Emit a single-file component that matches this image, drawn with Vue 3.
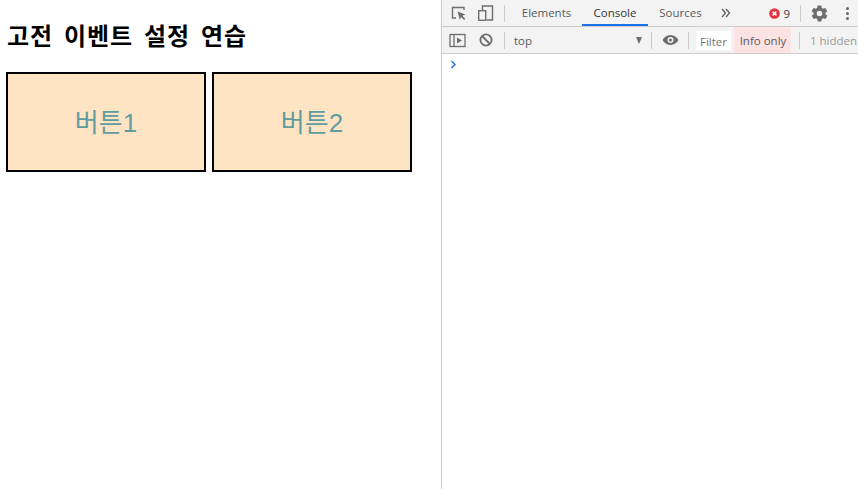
<script setup>
const buttons = ['버튼1', '버튼2']
const tabs = [
  { label: 'Elements', active: false, cls: 'w-el' },
  { label: 'Console', active: true, cls: 'w-co' },
  { label: 'Sources', active: false, cls: 'w-so' },
]
</script>

<template>
  <div class="page">
    <main class="content">
      <h1 class="title">고전 이벤트 설정 연습</h1>
      <div class="buttons">
        <button v-for="b in buttons" :key="b" class="btn" type="button"><span class="btn-label">{{ b }}</span></button>
      </div>
    </main>
    <aside class="devtools">
      <div class="bar top">
        <div class="icon-group">
          <svg class="ic" width="18" height="18" viewBox="0 0 18 18">
            <path d="M6 14H2.500V3.500H14V6" fill="none" stroke="#6e6e6e" stroke-width="1.400"/>
            <path d="M7.500 7.500l8 3-3.200 1.300 3 3-1.200 1.200-3-3L9.900 16z" fill="#6e6e6e"/>
          </svg>
          <svg class="ic" width="18" height="18" viewBox="0 0 18 18">
            <path d="M5.500 6V2h10v14h-6" fill="none" stroke="#6e6e6e" stroke-width="1.400"/>
            <rect x="1.700" y="6.700" width="7" height="9.600" fill="none" stroke="#6e6e6e" stroke-width="1.400"/>
          </svg>
        </div>
        <span class="sep sep-a"></span>
        <nav class="tabs">
          <span v-for="t in tabs" :key="t.label" class="tab" :class="[t.cls, { active: t.active }]">{{ t.label }}</span>
          <span class="more">
            <svg width="10" height="10" viewBox="0 0 10 10">
              <path d="M1 1l3.500 4L1 9M5 1l3.500 4L5 9" fill="none" stroke="#5a5a5a" stroke-width="1.200"/>
            </svg>
          </span>
        </nav>
        <div class="right">
          <span class="err">
            <svg width="11" height="11" viewBox="0 0 11 11">
              <circle cx="5.500" cy="5.500" r="5.300" fill="#e8323f"/>
              <path d="M3.600 3.600l3.800 3.800M7.400 3.600l-3.800 3.800" stroke="#fff" stroke-width="1.500"/>
            </svg>
            <span>9</span>
          </span>
          <span class="sep"></span>
          <svg class="gear" width="19" height="19" viewBox="0 0 24 24">
            <path fill="#6e6e6e" d="M19.400 13a7.600 7.600 0 0 0 0-2l2.100-1.600a.5.5 0 0 0 .1-.7l-2-3.400a.5.5 0 0 0-.6-.2l-2.500 1a7.400 7.400 0 0 0-1.700-1l-.4-2.700a.5.5 0 0 0-.5-.4h-4a.5.5 0 0 0-.5.4l-.4 2.700a7.400 7.400 0 0 0-1.700 1l-2.500-1a.5.5 0 0 0-.6.2l-2 3.400a.5.5 0 0 0 .1.7L4.600 11a7.600 7.600 0 0 0 0 2l-2.100 1.600a.5.5 0 0 0-.1.7l2 3.400c.1.2.4.3.6.2l2.500-1c.5.4 1.100.7 1.700 1l.4 2.700c0 .2.2.4.5.4h4c.3 0 .5-.2.5-.4l.4-2.700c.6-.3 1.200-.6 1.700-1l2.500 1c.2.1.5 0 .6-.2l2-3.400a.5.5 0 0 0-.1-.7zM12 15.500a3.500 3.500 0 1 1 0-7 3.500 3.500 0 0 1 0 7z"/>
          </svg>
          <span class="dots"><i></i><i></i><i></i></span>
        </div>
      </div>
      <div class="bar second">
        <div class="icon-group">
          <svg class="ic" width="17" height="15" viewBox="0 0 17 15">
            <rect x="1" y="1.500" width="15" height="12" fill="none" stroke="#6e6e6e" stroke-width="1.300"/>
            <path d="M5 1.500v12" stroke="#6e6e6e" stroke-width="1.300"/>
            <path d="M8 4.500l5 3-5 3z" fill="#6e6e6e"/>
          </svg>
          <svg class="ic" width="14" height="14" viewBox="0 0 14 14">
            <circle cx="7" cy="7" r="5.600" fill="none" stroke="#6e6e6e" stroke-width="1.800"/>
            <path d="M3 3l8 8" stroke="#6e6e6e" stroke-width="1.800"/>
          </svg>
        </div>
        <span class="sep"></span>
        <div class="context">
          <span>top</span>
          <span class="caret"></span>
        </div>
        <span class="sep"></span>
        <svg class="eye" width="17" height="12" viewBox="0 0 17 12">
          <path fill="#6e6e6e" fill-rule="evenodd" d="M8.500 1C4.800 1 2 3.200.6 6c1.400 2.800 4.200 5 7.900 5s6.500-2.200 7.900-5C15 3.200 12.200 1 8.500 1zm0 8a3 3 0 1 1 0-6 3 3 0 0 1 0 6zm0-1.500a1.500 1.500 0 1 0 0-3 1.500 1.500 0 0 0 0 3z"/>
        </svg>
        <span class="sep"></span>
        <span class="filter">Filter</span>
        <span class="level">Info only</span>
        <span class="sep"></span>
        <span class="hidden-count">1 hidden</span>
      </div>
      <div class="console">
        <svg width="7" height="9" viewBox="0 0 7 9">
          <path d="M1.500 1l3.500 3.500L1.500 8" fill="none" stroke="#2a6fe8" stroke-width="1.500"/>
        </svg>
      </div>
    </aside>
  </div>
</template>

<style>
html, body { margin: 0; background: #fff; }
</style>

<style scoped>
.page {
  display: flex;
  width: 858px;
  height: 489px;
  overflow: hidden;
  font-family: "Liberation Sans", "Noto Sans CJK KR", sans-serif;
}
.content {
  width: 441px;
  flex: none;
  padding: 22px 6px 0;
  box-sizing: border-box;
}
.title {
  margin: 0 0 20px;
  padding-left: 1px;
  font-size: 24px;
  line-height: 30px;
  font-weight: 700;
  color: #000;
  white-space: nowrap;
  letter-spacing: 0.9px;
  word-spacing: 3.500px;
}
.buttons { display: flex; gap: 6px; }
.btn {
  width: 200px;
  height: 100px;
  box-sizing: border-box;
  border: 2px solid #000;
  background: #ffe4c4;
  color: #5f9ea0;
  font: 400 26px "Liberation Sans", "Noto Sans CJK KR", sans-serif;
  padding: 0;
}
.btn-label { display: block; margin-top: -3px; }
.devtools {
  flex: 1;
  min-width: 0;
  border-left: 1px solid #ccc;
  display: flex;
  flex-direction: column;
  font-family: "Open Sans", sans-serif;
  font-size: 11.500px;
  color: #5a5a5a;
}
.bar {
  display: flex;
  align-items: center;
  background: #f3f3f3;
  border-bottom: 1px solid #ccc;
  box-sizing: border-box;
  flex: none;
}
.top { height: 27px; padding-left: 8px; }
.second { height: 27px; padding-left: 7px; }
.icon-group { display: flex; align-items: center; gap: 9px; }
.sep { width: 1px; height: 17px; background: #ccc; flex: none; }
.top .sep-a { margin: 0 6px 0 9px; }
.tabs { display: flex; align-items: center; height: 26px; }
.tab { line-height: 26px; height: 26px; box-sizing: border-box; text-align: center; }
.w-el { width: 71px; }
.w-co { width: 66px; }
.w-so { width: 65px; }
.tab.active { color: #333; box-shadow: inset 0 -2px 0 #1a73e8; }
.more { margin-left: 8px; display: flex; align-items: center; }
.right { margin-left: auto; display: flex; align-items: center; }
.err { display: flex; align-items: center; gap: 3px; margin-right: 10px; color: #444; }
.gear { margin: 0 0 0 9px; }
.dots { display: flex; flex-direction: column; gap: 2px; margin: 0 9px 0 17px; }
.dots i { width: 3px; height: 3px; border-radius: 50%; background: #666; display: block; }
.second .icon-group { gap: 13px; margin-right: 11px; }
.context {
  width: 146px;
  display: flex;
  justify-content: space-between;
  align-items: center;
  padding: 0 9px 0 9px;
  box-sizing: border-box;
}
.caret {
  width: 0; height: 0;
  border-left: 3.500px solid transparent;
  border-right: 3.500px solid transparent;
  border-top: 7px solid #6e6e6e;
}
.eye { margin: 0 9px 0 10px; }
.filter {
  margin: 1px 3px 0 7px;
  width: 35px;
  height: 19px;
  line-height: 21px;
  background: #fff;
  color: #757575;
  padding-left: 4px;
  box-sizing: border-box;
}
.level {
  width: 57px;
  height: 26px;
  line-height: 27px;
  background: #fde2e4;
  text-align: center;
  margin-right: 8px;
  padding-left: 1px;
  box-sizing: border-box;
}
.hidden-count { margin-left: 10px; color: #9a9a9a; white-space: nowrap; }
.console { flex: 1; background: #fff; padding: 6px 0 0 8px; }
.console svg { display: block; }
</style>
